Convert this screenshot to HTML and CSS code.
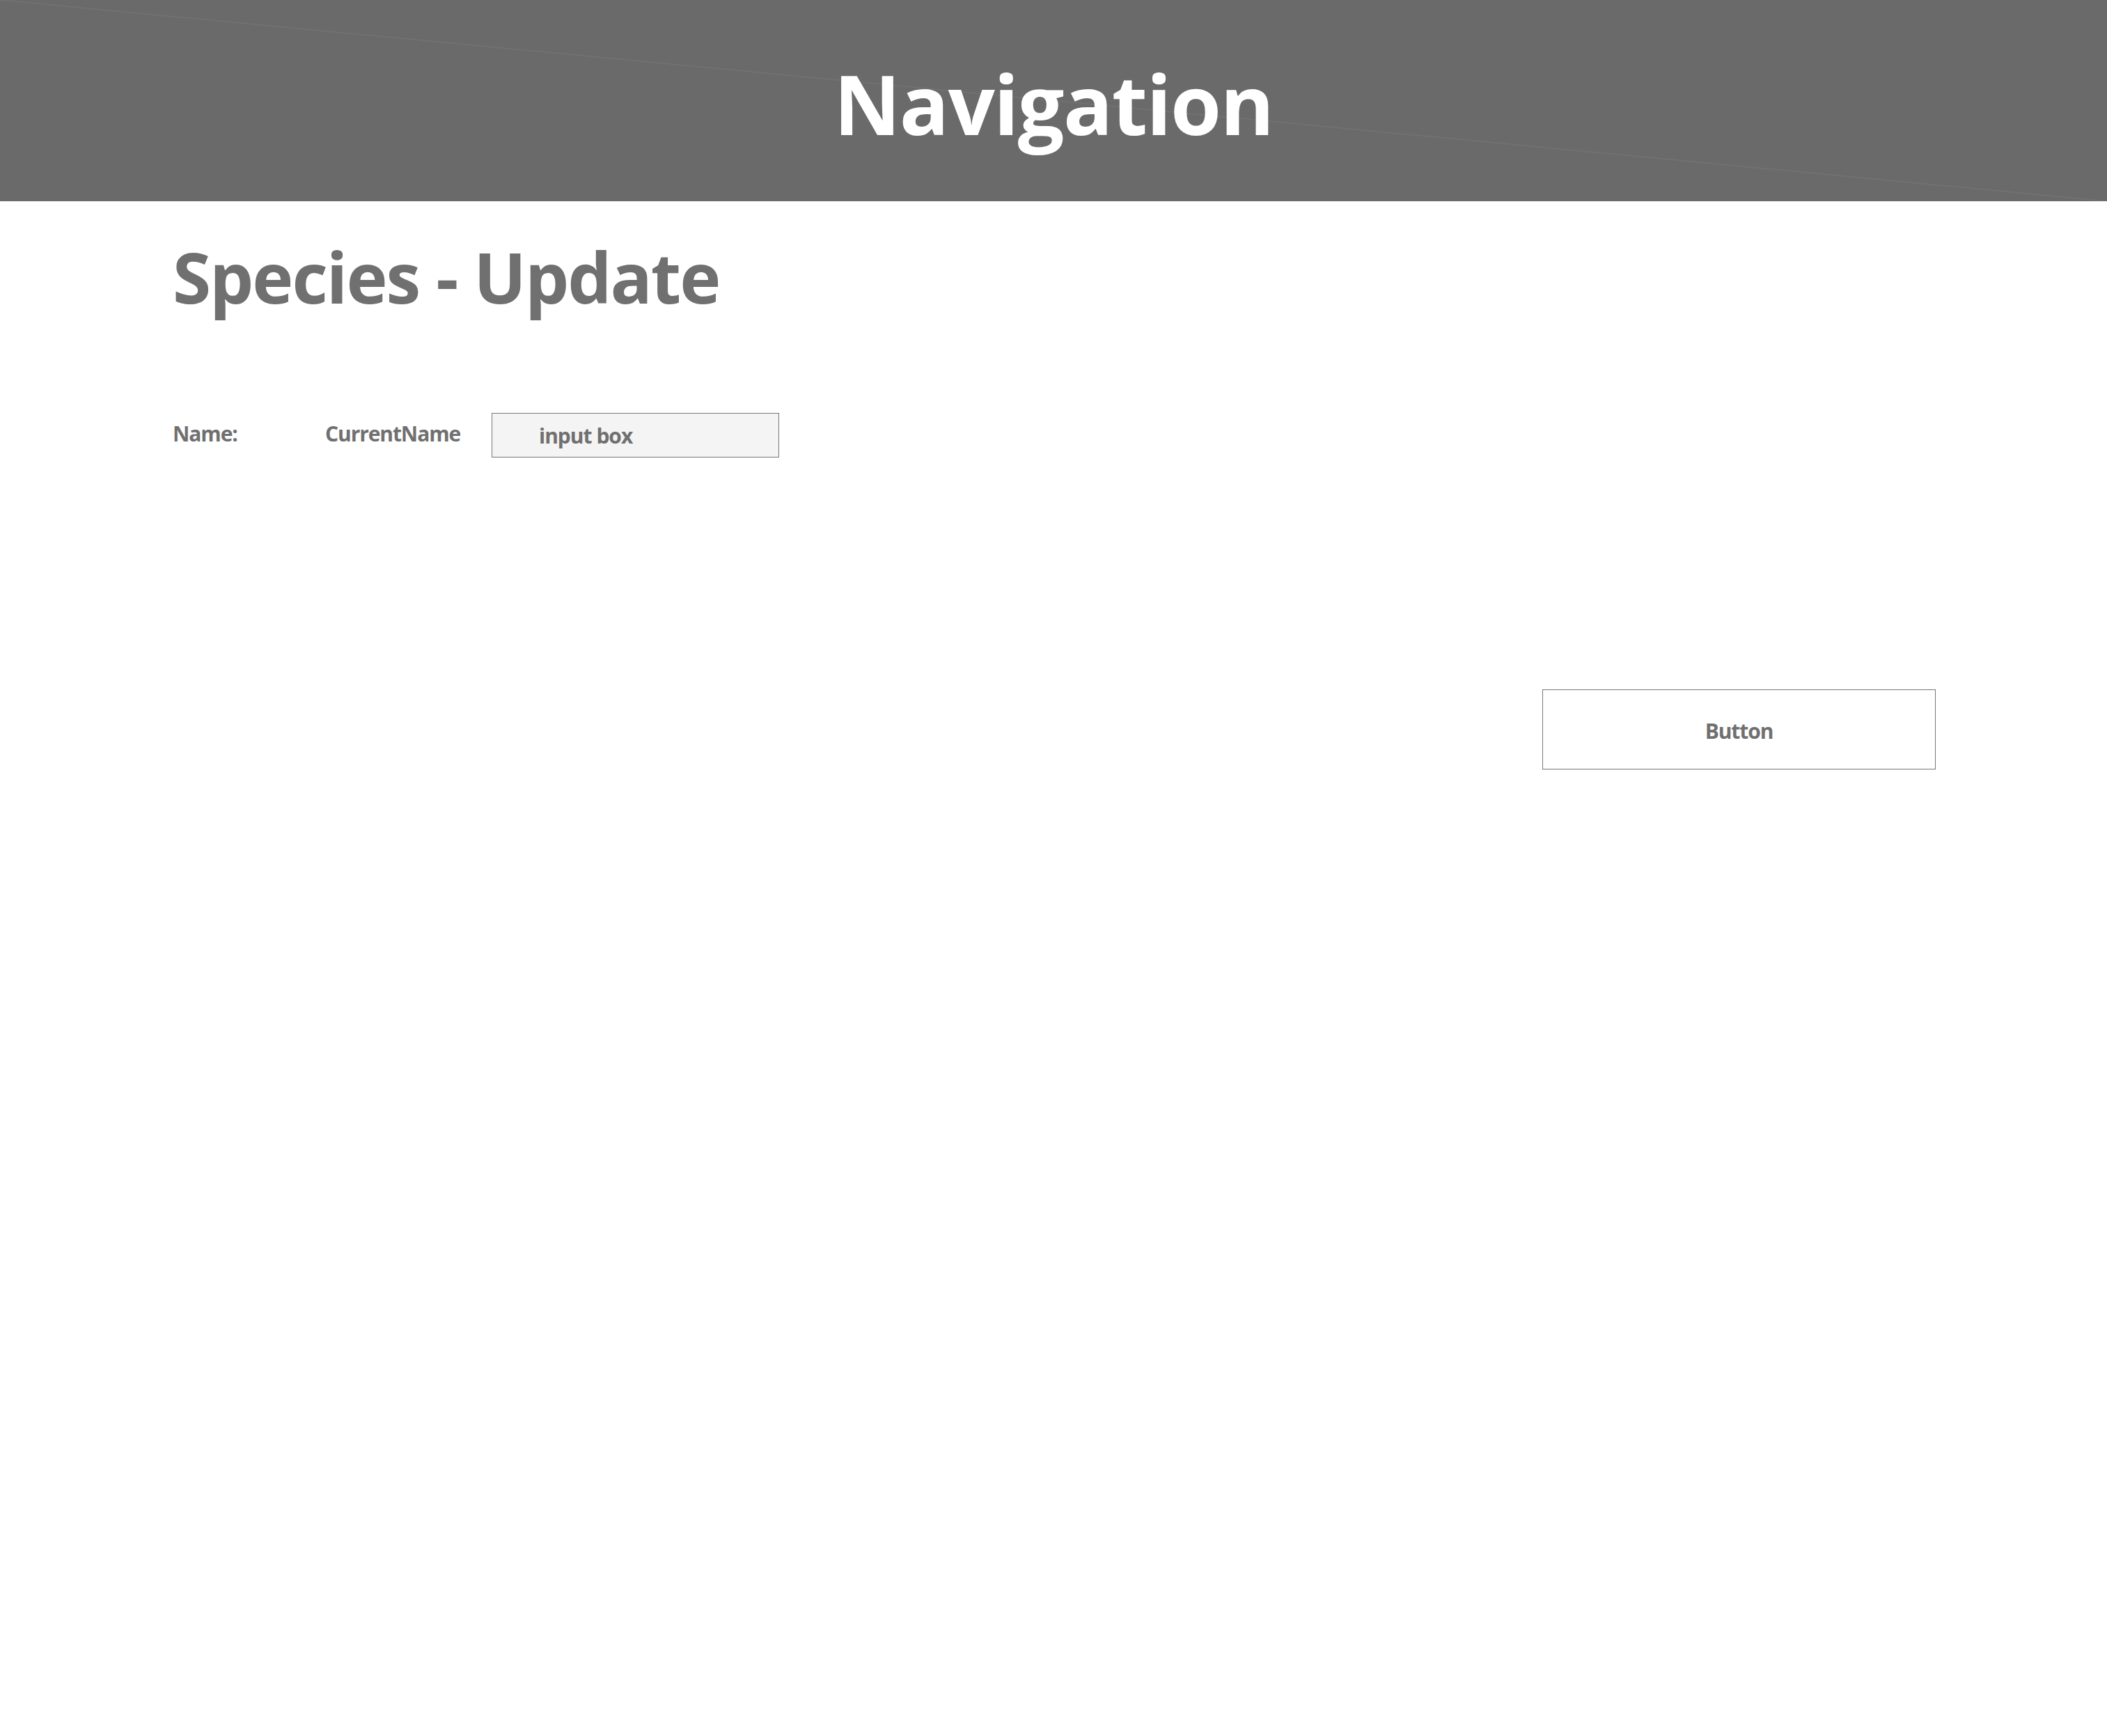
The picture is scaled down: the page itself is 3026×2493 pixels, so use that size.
FILE: index.html
```html
<!DOCTYPE html>
<html lang="en">
<head>
<meta charset="utf-8">
<title>Species - Update</title>
<link rel="stylesheet" href="styles.css">
</head>
<body>
<header class="nav">
  <svg class="nav-line" viewBox="0 0 3026 289" preserveAspectRatio="none" aria-hidden="true"><line x1="0" y1="0" x2="3026" y2="289" stroke="#737373" stroke-width="1.5"/></svg>
  <span class="nav-title">Navigation</span>
</header>
<main class="page">
  <h1 class="title">Species - Update</h1>
  <div class="row">
    <span class="label label-name">Name:</span>
    <span class="label label-current">CurrentName</span>
    <div class="input-box">input box</div>
  </div>
  <div class="actions">
    <div class="button">Button</div>
  </div>
</main>
</body>
</html>
```
FILE: styles.css
```css
html, body {
  margin: 0;
  padding: 0;
  background: #ffffff;
}
body {
  font-family: "Open Sans", "Noto Sans", "Liberation Sans", sans-serif;
  font-weight: 700;
  color: #707070;
}
.nav {
  position: relative;
  height: 289px;
  box-sizing: border-box;
  padding-top: 90px;
  background: #6a6a6a;
  text-align: center;
  overflow: hidden;
}
.nav-line {
  position: absolute;
  left: 0;
  top: 0;
  width: 100%;
  height: 100%;
}
.nav-title {
  position: relative;
  display: inline-block;
  font-size: 118px;
  line-height: 1;
  color: #ffffff;
  letter-spacing: -1.5px;
}
.page {
  padding: 0 246px 0 248px;
}
.title {
  margin: 58px 0 0 0;
  font-size: 100px;
  line-height: 1;
  font-weight: 700;
  letter-spacing: -2px;
}
.row {
  display: flex;
  align-items: flex-start;
  margin-top: 146px;
}
.label {
  font-size: 30px;
  line-height: 1;
  margin-top: 15px;
  letter-spacing: -1.1px;
}
.label-name {
  width: 219px;
}
.label-current {
  width: 239px;
}
.input-box {
  width: 413px;
  height: 64px;
  box-sizing: border-box;
  border: 1px solid #777777;
  background: #f4f4f4;
  padding: 17px 0 0 67px;
  font-size: 30px;
  line-height: 1;
  letter-spacing: -1px;
}
.actions {
  display: flex;
  justify-content: flex-end;
  margin-top: 333px;
}
.button {
  width: 565px;
  height: 115px;
  box-sizing: border-box;
  border: 1px solid #757575;
  display: flex;
  align-items: center;
  justify-content: center;
  padding-top: 4px;
  font-size: 30px;
  line-height: 1;
  letter-spacing: -1.1px;
}
```
